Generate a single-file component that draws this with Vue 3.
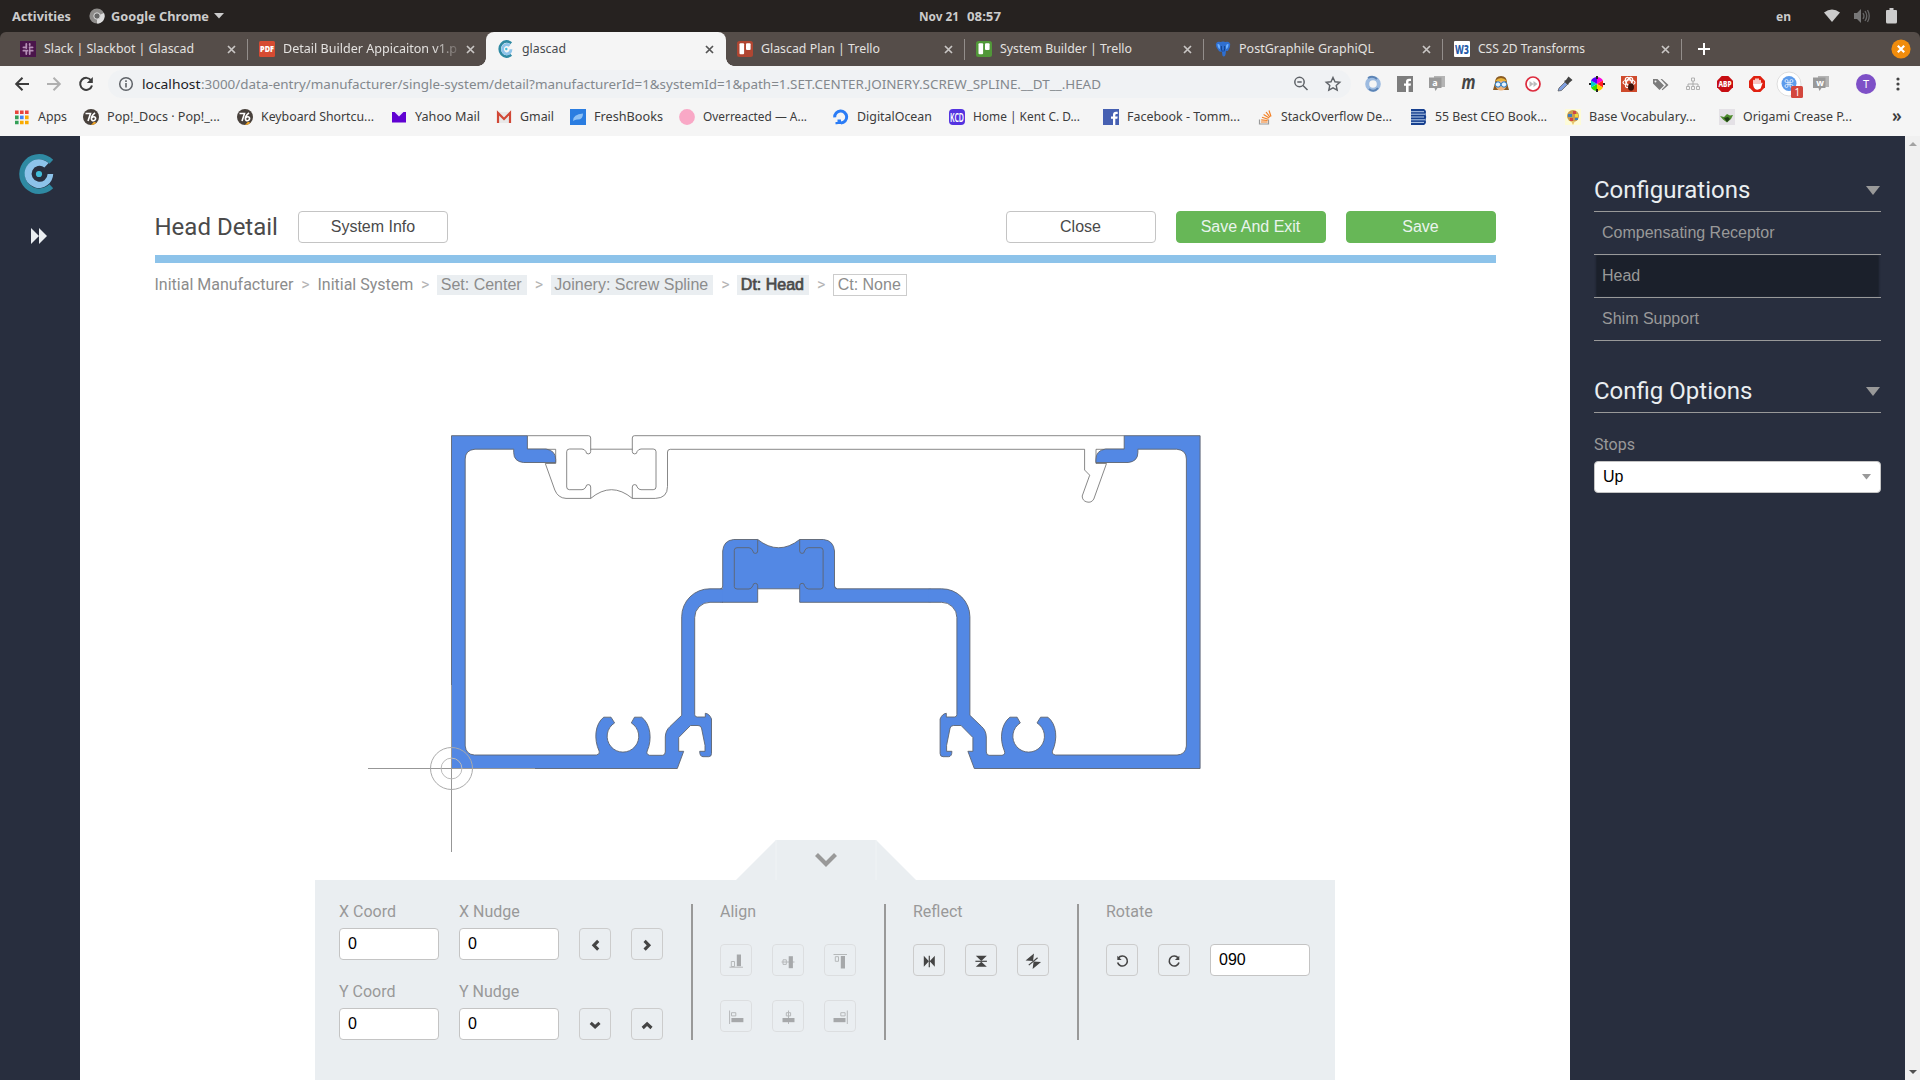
<script setup>
import { h } from 'vue'

// Text drawn to an exact advance width, used for the browser chrome labels
const FitText = (p) =>
  h('svg', { width: p.w, height: 18, style: 'display:block;overflow:visible;flex:none' }, [
    h('text', {
      x: 0, y: 14, textLength: p.w, lengthAdjust: 'spacingAndGlyphs', fill: 'currentColor'
    }, p.t)
  ])
FitText.props = ['t', 'w']

const logo = '<path d="M13.2 2.2A7 7.6 0 1 0 13.2 13.8" fill="none" stroke="#2f8aa3" stroke-width="2.6"/><path d="M11.6 4.7A4.2 4.7 0 1 0 13 8.2" fill="none" stroke="#8dc3ea" stroke-width="2.8"/><circle cx="8.3" cy="8" r="1.2" fill="#40bcd8"/>'
const trello = (c) => `<rect width="16" height="16" rx="2.5" fill="${c}"/><rect x="2.5" y="2.3" width="4.6" height="11" rx="1" fill="#fff"/><rect x="9" y="2.3" width="4.6" height="6.6" rx="1" fill="#fff"/>`
const pop = '<circle cx="8" cy="8" r="8" fill="#48413c"/><path d="M2.500 4.500h5L5 12M12 3.800Q8 7 8.400 10q.6 2.200 2.600 1.600 2.200-1 1.400-3-1.200-1.800-3.600.2" fill="none" stroke="#fff" stroke-width="1.600"/><path d="M8 16q3 0 5.500-2.200L11 12.800z" fill="#f5a623"/>'

const tabs = [
  { t: 'Slack | Slackbot | Glascad', w: 150, sep: true,
    i: '<rect width="16" height="16" fill="#4a154b"/><g stroke="#b58fb6" stroke-width="1.800" stroke-linecap="round"><path d="M6.300 3v4M9.700 3v1M9.700 6.200v.800M12.600 6.300h-3M3.400 6.300h3M3.400 9.700h4M9.700 9v4M9.700 9.700h3M6.300 9.700V13"/></g>' },
  { t: 'Detail Builder Appicaiton v1.p', w: 174, fade: true,
    i: '<rect width="16" height="16" rx="1.500" fill="#d64b32"/><text x="1" y="11" textLength="14" lengthAdjust="spacingAndGlyphs" font-family="Noto Sans" font-weight="900" font-size="8" fill="#fff">PDF</text>' },
  { t: 'glascad', w: 44, active: true, i: logo },
  { t: 'Glascad Plan | Trello', w: 119, sep: true, i: trello('#b04632') },
  { t: 'System Builder | Trello', w: 132, sep: true, i: trello('#519839') },
  { t: 'PostGraphile GraphiQL', w: 135, sep: true,
    i: '<path d="M.8 3Q2-.3 5.600 1 8 0 10.400 1 14-.3 15.200 3q.4 3.500-2 6.500-1.200 1-2.200.3-.2 4.200-1 5.200-1.500 1.200-2.600-.5L6.900 10.500Q5 11.500 3.500 9.500.5 6 .8 3z" fill="#2f6fd0"/><path d="M2.500 3q2.500-.5 2.500 3t-1.500 1Q2.300 5 2.500 3zM13.500 3q-2.500-.5-2.500 3t1.500 1q1.200-2 1-4z" fill="#6eb1ff"/><path d="M6.300 5q-.3 3.500 1 5.500M9.700 5q.3 3-.8 5.500" fill="none" stroke="#123f86"/>' },
  { t: 'CSS 2D Transforms', w: 107, sep: true,
    i: '<rect width="16" height="16" rx="1" fill="#fff"/><text x="1" y="12.500" textLength="14" lengthAdjust="spacingAndGlyphs" font-family="Noto Sans" font-weight="800" font-size="12.500" fill="#1f5aa8">W3</text>' }
]

const bookmarks = [
  { t: 'Apps', w: 29, x: 14, end: 83, i: '<path fill="#e8453c" d="M1 1.500h3.600v3.600H1zM6 1.500h3.600v3.600H6zM11 1.500h3.600v3.600H11z"/><path fill="#34a058" d="M1 6.600h3.600v3.600H1zM1 11.700h3.600v3.600H1z"/><path fill="#4285f4" d="M6 6.600h3.600v3.600H6z"/><path fill="#f9ab00" d="M11 6.600h3.600v3.600H11zM6 11.700h3.600v3.600H6zM11 11.700h3.600v3.600H11z"/>' },
  { t: 'Pop!_Docs · Pop!_...', w: 113, x: 83, end: 237, i: pop },
  { t: 'Keyboard Shortcu...', w: 113, x: 237, end: 391, i: pop },
  { t: 'Yahoo Mail', w: 65, x: 391, end: 496, i: '<rect x="1" y="3" width="14" height="10.500" fill="#6001d2"/><path d="M3.500 3h9L8 7.500z" fill="#fff" opacity=".9"/>' },
  { t: 'Gmail', w: 34, x: 496, end: 570, i: '<rect x="1" y="3" width="14" height="11" fill="#e8e8e8"/><path d="M2 14V4l6 6 6-6v10" fill="none" stroke="#d14836" stroke-width="2.200"/>' },
  { t: 'FreshBooks', w: 69, x: 570, end: 679, i: '<rect width="16" height="16" fill="#2a7de1"/><path d="M3 12Q3 5 13 4.500 13 11 7 10.500 5 10.500 3 12z" fill="#8cc0f5"/>' },
  { t: 'Overreacted — A...', w: 104, x: 679, end: 833, i: '<circle cx="8" cy="8" r="7.900" fill="#f9a8c6"/>' },
  { t: 'DigitalOcean', w: 75, x: 833, end: 949, i: '<path d="M8 14a6 6 0 1 0-6.300-5.600" fill="none" stroke="#2b7cf6" stroke-width="3"/><path d="M4.500 10.500H8V15H4.500zM2.500 13h2v2.300h-2z" fill="#2b7cf6"/>' },
  { t: 'Home | Kent C. D...', w: 107, x: 949, end: 1103, i: '<rect width="16" height="16" rx="4" fill="#5433e0"/><text x="1" y="12.500" textLength="14" lengthAdjust="spacingAndGlyphs" font-family="Noto Sans" font-weight="600" font-size="12.500" fill="#fff">KCD</text>' },
  { t: 'Facebook - Tomm...', w: 113, x: 1103, end: 1257, i: '<rect width="16" height="16" fill="#4660b2"/><path d="M10 16V9.800h-2V7.500h2V5.700q0-2.900 3-2.900h1.700v2.300h-1.200q-1.200 0-1.200 1v1.400h2.400l-.4 2.300h-2V16z" fill="#fff"/>' },
  { t: 'StackOverflow De...', w: 111, x: 1257, end: 1411, i: '<path d="M2.500 10.500v4.500h9v-4.500" fill="none" stroke="#999" stroke-width="1.200"/><path d="M4 13h6.500M4.200 10.800l6.400.7M5 8.200l6.200 2M6.600 5.600l5.600 3.500M9 3l4 5.200M12 1.500l2 6" stroke="#f48024" stroke-width="1.200"/>' },
  { t: '55 Best CEO Book...', w: 112, x: 1411, end: 1565, i: '<path d="M0 0h13q3 2 1.500 5Q16 8 14.500 11q1.500 3-1.500 5H0z" fill="#17408f"/><path d="M0 2.700h13M0 5.200h14M0 8h13M0 10.800h14M0 13.400h13" stroke="#c8dcf5" stroke-width=".9"/>' },
  { t: 'Base Vocabulary...', w: 107, x: 1565, end: 1719, i: '<rect width="16" height="16" fill="#fdfbd8"/><circle cx="8" cy="7" r="6" fill="#c99c4e"/><path d="M3 5h4v3H3zM10 9h3v2h-3z" fill="#3e7cc0"/><path d="M8 2h3v3H8zM5 9h3v3H5z" fill="#cf4747"/><path d="M10 5h3v3h-3z" fill="#f3d83b"/><path d="M6 12l2 4 2-4" fill="#e9c46a"/>' },
  { t: 'Origami Crease P...', w: 109, x: 1719, end: 1880, i: '<rect width="16" height="16" fill="#e4e1e6"/><path d="M1 7l4 1 3-3 3 1.500 3-.5-2 4-4 3.500-4-3z" fill="#4c8a2c"/><path d="M5 9l4-1 2 2-3 3z" fill="#1f3c16"/>' }
]

const bubble = (c) => `<rect x="5" y="0" width="11" height="11" fill="#b4b4b4"/><path d="M0 1.500h12.500v10.500H8.500L6.500 15l-1-3H0z" fill="#999"/><text x="3.200" y="10" font-family="Noto Sans" font-weight="700" font-size="9" fill="#fff">${c}</text>`
const extensions = [
  '<circle cx="8" cy="8" r="5.800" fill="none" stroke="#9dbbe0" stroke-width="4"/><path d="M3 2Q8-1 12 3M13 12Q9 17 4 13" fill="none" stroke="#5c84b5" stroke-width="2"/>',
  '<rect width="16" height="16" fill="#7d7d7d"/><path d="M9 16V9.800H7V7.500h2V5.700q0-2.900 3-2.900h2v2.300h-1.400q-1.200 0-1.200 1v1.400H14l-.4 2.300h-2V16z" fill="#fff"/>',
  bubble('a'),
  '<text x=".5" y="12.500" textLength="14" lengthAdjust="spacingAndGlyphs" font-family="Noto Sans" font-style="italic" font-weight="700" font-size="19" fill="#444">m</text>',
  '<path d="M2 7q0-7 6-7t6 7l2 7H0z" fill="#8a5a21"/><circle cx="8" cy="9" r="5.500" fill="#f0b47c"/><path d="M2 5q6-6 12 0z" fill="#e9b43b"/><circle cx="5" cy="8.500" r="2.700" fill="#e6f4ff" stroke="#1e78c8"/><circle cx="11" cy="8.500" r="2.700" fill="#e6f4ff" stroke="#1e78c8"/>',
  '<circle cx="8" cy="8" r="7" fill="#fff" stroke="#dd2c3e" stroke-width="1.700"/><path d="M4.500 5l4 3-4 3zM8.500 5l4 3-4 3z" fill="#bbb"/>',
  '<path d="M1 15l1-3 6-6 2.500 2.500-6 6z" fill="#7f9fe0" stroke="#555" stroke-width=".7"/><path d="M7 5l2-1 2.500-3.500 4 3.500-3.500 3-1 2z" fill="#444"/>',
  '<path d="M8 8V1a7 7 0 0 1 6 3.500z" fill="#f0d"/><path d="M8 8l6-3.500v7z" fill="#f22"/><path d="M8 8l6 3.500A7 7 0 0 1 8 15z" fill="#fc0"/><path d="M8 8v7a7 7 0 0 1-6-3.500z" fill="#3d0"/><path d="M8 8l-6 3.500v-7z" fill="#0cc"/><path d="M8 8L2 4.500A7 7 0 0 1 8 1z" fill="#50f"/><path d="M7 0h2v3H7zM7 13h2v3H7zM0 7h2v2H0zM14 7h2v2h-2z" fill="#222"/>',
  '<rect width="16" height="16" fill="#cf4a2c"/><g fill="none" stroke="#fff" stroke-width="1.200"><ellipse cx="8" cy="6.500" rx="6" ry="2.500"/><ellipse cx="8" cy="6.500" rx="2.500" ry="5.500" transform="rotate(30 8 6.500)"/><ellipse cx="8" cy="6.500" rx="2.500" ry="5.500" transform="rotate(-30 8 6.500)"/></g><ellipse cx="10" cy="11" rx="3" ry="3.800" fill="#3a120b"/>',
  '<path d="M0 3v4.500l6.500 6.500L11 9.500 4.500 3zM6 3h1.500L13 9l-4.300 4.500.8.700L15.500 9 9 3z" fill="#7c7c7c"/><circle cx="2.500" cy="5.500" r="1" fill="#f5f5f5"/>',
  '<path d="M8 4v8M3 11V8h10v3" fill="none" stroke="#aaa"/><path d="M6.500 2h3v3h-3zM1.500 10.500h3v3h-3zM6.500 10.500h3v3h-3zM11.500 10.500h3v3h-3z" fill="#f5f5f5" stroke="#aaa" stroke-width=".9"/>',
  '<path d="M4.700 0h6.600L16 4.700v6.600L11.300 16H4.700L0 11.300V4.700z" fill="#c70d12"/><text x="1.500" y="11" textLength="13" lengthAdjust="spacingAndGlyphs" font-family="Noto Sans" font-weight="800" font-size="8" fill="#fff">ABP</text>',
  '<path d="M4.700 0h6.600L16 4.700v6.600L11.300 16H4.700L0 11.300V4.700z" fill="#e02010"/><path d="M5 9V4.500M7 8V3M9 8V3M11 9V4.500" stroke="#fff" stroke-width="1.500" stroke-linecap="round"/><path d="M4.300 8h7.500l1-1.500.800.500-2 5.500q-3 2-5.500.5Q4 11 4.300 8z" fill="#fff"/>',
  '<circle cx="8" cy="8" r="12" fill="#fff" stroke="#dedede"/><circle cx="8" cy="7.500" r="7.500" fill="#5d9cec"/><path d="M5.500 3.500a1.500 1.500 0 1 0 0 3h5a1.500 1.500 0 1 0-1.500-1.500v5a1.500 1.500 0 1 0 1.500-1.500h-5A1.500 1.500 0 1 0 7 10V5a1.500 1.500 0 0 0-1.500-1.500z" fill="none" stroke="#d5e6fb"/><rect x="10" y="10" width="12" height="12" rx="1.500" fill="#d3473d"/><text x="13.500" y="20" font-family="Noto Sans" font-size="10" fill="#fff">1</text>',
  bubble('w')
]

const crumbs = [
  { t: 'Initial Manufacturer' },
  { t: 'Initial System' },
  { t: 'Set: Center', c: 'chip' },
  { t: 'Joinery: Screw Spline', c: 'chip' },
  { t: 'Dt: Head', c: 'chip current' },
  { t: 'Ct: None', c: 'outline' }
]

const chev = (d) => `<path d="${d}" fill="none" stroke="#444" stroke-width="3.100"/>`
const left = chev('M11.200 4.900L6.900 9.300l4.300 4.400')
const right = chev('M5.600 4.900l4.300 4.400-4.300 4.400')
const down = chev('M3.700 6.900L8.100 11l4.400-4.100')
const up = chev('M3.700 12L8.100 7.900l4.400 4.100')

// filled bar + outlined box + guide line
const alignIcons = [
  '<path d="M1.500 15.200H15" stroke="#777"/><path d="M3.300 9.500h3.200v5H3.300z" fill="none" stroke="#777"/><path d="M8.800 2.500H13v11.700H8.800z" fill="#555"/>',
  '<path d="M1.500 10h13" stroke="#777"/><path d="M3 7.800h3.300v4.600H3z" fill="none" stroke="#777"/><path d="M8.700 4.200h4.200v12H8.700z" fill="#555"/>',
  '<path d="M1.500 2.500H15" stroke="#777"/><path d="M3.300 4.700h3.200v4.600H3.300z" fill="none" stroke="#777"/><path d="M8.800 4H13v12.500H8.800z" fill="#555"/>',
  '<path d="M1.600 2.500v13.500" stroke="#777"/><path d="M3.500 4.700h4.300v3.200H3.500z" fill="none" stroke="#777"/><path d="M3.400 10h12v4.200h-12z" fill="#555"/>',
  '<path d="M8.500 2.500v13.500" stroke="#777"/><path d="M6.300 4.700h4.300v3.200H6.300z" fill="none" stroke="#777"/><path d="M2.500 10h12v4.200h-12z" fill="#555"/>',
  '<path d="M15.300 2.500v13.500" stroke="#777"/><path d="M8.800 4.700h4.300v3.200H8.800z" fill="none" stroke="#777"/><path d="M1.500 10h12v4.200h-12z" fill="#555"/>'
]
const mirror = '<path d="M2.800 3.800L7.900 9.300l-5.100 5.500zM13.800 3.800L8.700 9.300l5.100 5.500z"/><path d="M8.300 3.700v11.500" stroke="#444" stroke-width="1.200"/>'
const reflectIcons = [
  mirror,
  `<g transform="rotate(90 8.300 9.300)">${mirror}</g>`,
  `<g transform="rotate(50 8.300 9.300)">${mirror}</g>`
]
const ccw = '<path d="M4.400 6A5 5 0 1 1 3.600 10.500" fill="none" stroke="#444" stroke-width="1.600"/><path d="M3.300 3.700v4.400h4.400z"/>'
const cw = `<g transform="translate(16.600) scale(-1 1)">${ccw}</g>`

const configs = ['Compensating Receptor', 'Head', 'Shim Support']

const half = 'M722.700 602.300H710A15.200 15.200 0 0 0 694.700 617.500V714.500Q694.700 717 697.200 717H705.300V713.300Q709.500 713.800 711.500 719V753.500Q711.500 756.700 708.500 756.700H703Q699.700 756.500 699.700 751.300H705V745.300L701.500 728Q700.800 725.500 698 725.500H690.500L678.700 737.500V751.300H683.700L677.300 768.500H451.500V435.700H527.400V449H546Q555.700 450.500 555.700 459.500V462.500H523.500Q513.700 461.500 513.700 452.500V449.200H475Q465.200 450 465.200 459V746Q466 754.500 474.500 755H596.500Q600.500 754 599.200 751.200C593.500 739 595 724 603.700 717.200H611L614.600 722.900A15.800 15.800 0 1 0 631.300 722.900L634.500 717.200H641.700C650.500 724 652.500 739 647.200 751Q646 754.500 649.500 755.300H662.500Q665 755.300 665.300 752V737Q665.500 730.500 670 726.500L681.700 715.300V616.700A28 28 0 0 1 710 588.800H722.700'
const hook = 'M757.700 539.500V551a2.400 2.400 0 0 1-4.800 0q-1.500-3.300-3.900-3.300H737q-2.700 0-2.700 2.700V586.500q0 2.500 2.700 2.500H749q2.400 0 3.900-3.300a2.400 2.400 0 0 1 4.800 0V602.300'
</script>

<template>
  <div class="screen">
    <header class="topbar">
      <div class="top-left">
        <FitText t="Activities" :w="59" />
        <svg class="chrome" width="16" height="16" viewBox="0 0 16 16"><circle cx="8" cy="8" r="7.600" fill="#8e8c8a" /><path d="M8 8l7-3a7.600 7.600 0 0 1-7 10.600z" fill="#ddd" /><circle cx="8" cy="8" r="3.200" fill="#666" stroke="#ddd" /></svg>
        <FitText t="Google Chrome" :w="98" />
        <svg class="caret" width="10" height="6"><path d="M0 0h10L5 5.500z" fill="#ccc" /></svg>
      </div>
      <div class="clock"><FitText t="Nov 21" :w="40" /><FitText t="08:57" :w="34" /></div>
      <div class="top-right">
        <FitText t="en" :w="15" />
        <svg class="wifi" width="16" height="14"><path d="M0 3.500Q8-2.500 16 3.500L8 13z" fill="#ccc" /></svg>
        <svg class="sound" width="17" height="16"><path d="M1 5h3l4-4v14l-4-4H1z" fill="#777" /><path d="M10 5q2 3 0 6M12 3q3.500 5 0 10M14.500 2q3.500 6 0 12" fill="none" stroke="#666" stroke-width="1.300" /></svg>
        <svg class="battery" width="11" height="16"><path d="M3.500 0h4v2H10q1 0 1 1v11q0 1.500-1.500 1.500h-8Q0 15.500 0 14V3q0-1 1-1h2.500z" fill="#ccc" /></svg>
      </div>
    </header>

    <nav class="tabs">
      <div v-for="tab in tabs" :key="tab.t" class="tab" :class="{ active: tab.active, sep: tab.sep, fade: tab.fade }">
        <svg class="fav" width="16" height="16" viewBox="0 0 16 16" v-html="tab.i" />
        <FitText class="tab-text" :t="tab.t" :w="tab.w" />
        <svg class="x" width="9" height="9" viewBox="0 0 9 9"><path d="M1 1l7 7M8 1L1 8" stroke="currentColor" stroke-width="1.700" /></svg>
      </div>
      <svg class="plus" width="12" height="12"><path d="M6 0v12M0 6h12" stroke="#fff" stroke-width="2" /></svg>
      <svg class="close" width="20" height="20"><circle cx="10" cy="10" r="9.600" fill="#f08c0c" /><path d="M6.800 6.800l6.400 6.400M13.200 6.800l-6.400 6.400" stroke="#fff" stroke-width="2.200" /></svg>
    </nav>

    <div class="toolbar">
      <svg class="nav-ico" width="16" height="16"><path d="M15 8H2.500M8.500 1.700L2.200 8l6.300 6.300" fill="none" stroke="#3c3c3c" stroke-width="2" /></svg>
      <svg class="nav-ico" width="16" height="16"><path d="M1 8h12.500M7.500 1.700L13.800 8l-6.300 6.300" fill="none" stroke="#b0b0b0" stroke-width="2" /></svg>
      <svg class="nav-ico" width="16" height="16"><path d="M13.200 4.500A6 6 0 1 0 14 9.500" fill="none" stroke="#3c3c3c" stroke-width="2" /><path d="M14.800 1v6h-6z" fill="#3c3c3c" /></svg>
      <div class="url">
        <svg class="info" width="16" height="16"><circle cx="8" cy="8" r="6.300" fill="none" stroke="#5f6368" stroke-width="1.500" /><path d="M8 7v4.500M8 4.300V6" stroke="#5f6368" stroke-width="1.600" /></svg>
        <FitText class="host" t="localhost" :w="58.500" />
        <FitText class="path" t=":3000/data-entry/manufacturer/single-system/detail?manufacturerId=1&systemId=1&path=1.SET.CENTER.JOINERY.SCREW_SPLINE.__DT__.HEAD" :w="900" />
        <svg class="lens" width="16" height="16"><circle cx="6.500" cy="6" r="4.700" fill="none" stroke="#5f6368" stroke-width="1.500" /><path d="M10 9.500l4.500 4.500M4.300 6h4.400" stroke="#5f6368" stroke-width="1.500" /></svg>
        <svg class="star" width="16" height="16"><path d="M8 1.500l2 4.300 4.800.500-3.600 3.200 1 4.700L8 11.800l-4.200 2.400 1-4.700L1.200 6.300 6 5.800z" fill="none" stroke="#5f6368" stroke-width="1.400" /></svg>
      </div>
      <div class="exts">
        <svg v-for="(e, n) in extensions" :key="n" width="16" height="16" viewBox="0 0 16 16" v-html="e" />
      </div>
      <div class="avatar">T</div>
      <svg class="dots" width="4" height="14"><circle cx="2" cy="2" r="1.600" /><circle cx="2" cy="7" r="1.600" /><circle cx="2" cy="12" r="1.600" /></svg>
    </div>

    <div class="bookmarks">
      <div v-for="b in bookmarks" :key="b.t" class="bm" :style="{ width: b.end - b.x + 'px' }">
        <svg width="16" height="16" viewBox="0 0 16 16" v-html="b.i" />
        <FitText class="bm-text" :t="b.t" :w="b.w" />
      </div>
      <span class="more">»</span>
    </div>

    <div class="app">
      <aside class="rail">
        <svg width="40" height="42" viewBox="0 0 40 42">
          <path d="M34.200 6.700A20 20 0 1 0 34.200 35.300L30.400 31.300A14.400 14.400 0 1 1 30.400 10.700z" fill="#2f8aa3" />
          <path d="M29.600 10.100A14.300 14.300 0 1 0 34.200 21H28.600A8 8 0 1 1 25.400 14.400z" fill="#8dc3ea" />
          <circle cx="20" cy="21" r="3.100" fill="#40bcd8" />
        </svg>
        <svg class="ff" width="16" height="16"><path d="M0 0l8 8-8 8zM8 0l8 8-8 8z" fill="#eaeef1" /></svg>
      </aside>

      <main class="main">
        <div class="head">
          <h1>Head Detail</h1>
          <button class="btn">System Info</button>
          <div class="actions">
            <button class="btn">Close</button>
            <button class="btn green">Save And Exit</button>
            <button class="btn green">Save</button>
          </div>
        </div>
        <div class="crumbs">
          <template v-for="(c, n) in crumbs" :key="c.t">
            <span v-if="n" class="gt">&gt;</span>
            <span :class="c.c">{{ c.t }}</span>
          </template>
        </div>

        <svg class="canvas" width="1341" height="544" viewBox="155 310 1341 544">
          <g fill="none" stroke="#6a6a6a" stroke-width=".8">
            <path d="M527.400 435.700H588.500Q590.700 435.700 590.700 438V451.500a2.400 2.400 0 0 1-4.800 0q-1.500-2.500-3.900-2.500H569.500q-2.800 0-2.800 2.700V487q0 2.700 2.800 2.700H582q2.400 0 3.900-2.700a2.400 2.400 0 0 1 4.800 0V498.400H566Q558 498 554.800 490L545.300 463.500H555.700V449.300H527.400" />
            <path d="M590.700 449.200H632.300M590.700 498.400Q611.500 481 632.300 498.400" />
            <path d="M1124.300 435.700H634.500Q632.300 435.700 632.300 438V451.500a2.400 2.400 0 0 0 4.800 0q1.500-2.500 3.900-2.500H653.200q2.800 0 2.800 2.700V487q0 2.700-2.800 2.700H641q-2.400 0-3.900-2.700a2.400 2.400 0 0 0-4.800 0V498.400H655.500Q667.500 498 667.500 486.500V452Q667.500 449.300 670.300 449.300H1084.600V470L1089.700 475.200 1082.200 496A6.200 6.200 0 0 0 1093.800 499L1106.500 463.500H1096V449.300H1124.300" />
          </g>
          <g fill="#5388e4" stroke="#5d6470" stroke-width=".9">
            <path stroke="none" d="M720 588.800H722.700V551Q723.500 540.500 733.700 539.500H757.700Q778.700 556 799.700 539.500H823.500Q833.500 540.500 834.500 551V586L837.500 588.800H931V602.300H799.700V588.800H757.700V602.300H720z" />
            <path :d="half" />
            <path :d="half" transform="translate(1651.600) scale(-1 1)" />
            <g fill="none">
              <path d="M720.500 588.800Q722.700 588.800 722.700 586V551Q723.500 540.500 733.700 539.500H757.700Q778.700 556 799.700 539.500H823.500Q833.500 540.500 834.500 551V586Q834.500 588.800 837.500 588.800H929M757.700 588.800H799.700M757.700 602.300H722M799.700 602.300H929" />
              <path :d="hook" /><path :d="hook" transform="translate(1557.400) scale(-1 1)" />
            </g>
          </g>
          <g fill="none" stroke="#979797"><path d="M368 768.500H535M451.500 685V852" /><circle cx="451.500" cy="768.500" r="21" stroke="#aaa" /><circle cx="451.500" cy="768.500" r="10.400" stroke="#bbb" /></g>
        </svg>

        <section class="dock">
          <svg class="handle" width="180" height="40"><path d="M0 40L40 0H140L180 40z" fill="#eaeef1" /><path d="M40 0V40M140 0V40" stroke="#f0f3f5" /><path d="M80.500 14.500L90 24l9.500-9.500" fill="none" stroke="#999" stroke-width="4.200" /></svg>
          <div class="panel">
            <div class="coords">
              <div class="row">
                <label>X Coord<span class="input">0</span></label>
                <label>X Nudge<span class="input">0</span></label>
                <span class="sq"><svg width="16" height="16" v-html="left" /></span>
                <span class="sq"><svg width="16" height="16" v-html="right" /></span>
              </div>
              <div class="row">
                <label>Y Coord<span class="input">0</span></label>
                <label>Y Nudge<span class="input">0</span></label>
                <span class="sq"><svg width="16" height="16" v-html="down" /></span>
                <span class="sq"><svg width="16" height="16" v-html="up" /></span>
              </div>
            </div>
            <i class="divider" />
            <div class="group">
              <span class="title">Align</span>
              <div class="grid disabled"><span v-for="(a, n) in alignIcons" :key="n" class="sq"><svg width="16" height="17" v-html="a" /></span></div>
            </div>
            <i class="divider" />
            <div class="group">
              <span class="title">Reflect</span>
              <div class="grid"><span v-for="(a, n) in reflectIcons" :key="n" class="sq"><svg width="16" height="16" fill="#444" v-html="a" /></span></div>
            </div>
            <i class="divider" />
            <div class="group">
              <span class="title">Rotate</span>
              <div class="row rot">
                <span class="sq"><svg width="16" height="16" fill="#444" v-html="ccw" /></span>
                <span class="sq"><svg width="16" height="16" fill="#444" v-html="cw" /></span>
                <span class="input">090</span>
              </div>
            </div>
          </div>
        </section>
      </main>

      <aside class="side">
        <div class="side-title"><h2>Configurations</h2><svg width="14" height="9"><path d="M0 0h14L7 9z" fill="#999" /></svg></div>
        <div v-for="c in configs" :key="c" class="config" :class="{ on: c === 'Head' }">{{ c }}</div>
        <div class="side-title second"><h2>Config Options</h2><svg width="14" height="9"><path d="M0 0h14L7 9z" fill="#999" /></svg></div>
        <div class="stops">Stops</div>
        <div class="select">Up<svg width="9" height="6"><path d="M0 0h9L4.500 5.500z" fill="#999" /></svg></div>
      </aside>
      <div class="scroll">
        <svg width="8" height="4"><path d="M0 4h8L4 0z" fill="#a3a3a3" /></svg>
        <svg width="8" height="4"><path d="M0 0h8L4 4z" fill="#505050" /></svg>
      </div>
    </div>
  </div>
</template>

<style>
html, body { margin: 0; overflow: hidden; }
</style>
<style scoped>
* { box-sizing: border-box; }
svg { display: block; flex: none; overflow: visible; }
.screen { width: 1920px; height: 1080px; display: flex; flex-direction: column; font: 13.2px "Noto Sans", sans-serif; background: #fff linear-gradient(#262220, #262220) no-repeat 0 0 / 100% 60px; overflow: hidden; }
.topbar { height: 32px; flex: none; background: #262220; color: #ccc; font-weight: 700; display: grid; grid-template-columns: 1fr 82px 1fr; align-items: center; }
.top-left { display: flex; align-items: center; padding-left: 12px; }
.chrome { margin: 0 6px 0 18px; }
.caret { margin-left: 5px; }
.clock { display: flex; justify-content: space-between; }
.top-right { display: flex; align-items: center; justify-content: flex-end; padding-right: 23px; }
.wifi { margin-left: 33px; }
.sound { margin-left: 13px; }
.battery { margin-left: 16px; }
.tabs { height: 34px; flex: none; background: #554d49; border-radius: 6px 6px 0 0; display: flex; align-items: center; padding-left: 8px; color: #e4e2e0; }
.tab { width: 239px; height: 34px; display: flex; align-items: center; padding-left: 12px; position: relative; flex: none; }
.tab-text { margin: -2px 0 0 8px; }
.x { position: absolute; right: 11px; top: 12.500px; color: #c9c6c4; }
.tab.sep::after { content: ""; position: absolute; right: -1px; top: 7px; width: 1px; height: 21px; background: #938e8b; }
.tab.fade .tab-text { -webkit-mask: linear-gradient(90deg, #000 150px, transparent 180px); mask: linear-gradient(90deg, #000 150px, transparent 180px); }
.tab.active { width: 240px; margin-right: -1px; background: #f5f5f5; color: #45494d; border-radius: 8px 8px 0 0; }
.tab.active .x { color: #555; right: 12px; }
.tab.active::before, .tab.active::after { content: ""; position: absolute; bottom: 0; width: 8px; height: 8px; }
.tab.active::before { left: -8px; background: radial-gradient(circle at 0 0, transparent 7.500px, #f5f5f5 8px); }
.tab.active::after { right: -8px; background: radial-gradient(circle at 100% 0, transparent 7.500px, #f5f5f5 8px); }
.plus { margin-left: 17px; }
.close { margin-left: auto; margin-right: 9px; }
.toolbar { height: 36px; flex: none; background: #f5f5f5; display: flex; align-items: center; padding-left: 14px; }
.nav-ico { margin-right: 16px; }
.url { width: 1243px; height: 28px; margin-left: -2px; border-radius: 14px; background: #f0f2f4; display: flex; align-items: center; padding-left: 10px; }
.info { margin-right: 8px; }
.host { color: #202124; }
.path { color: #83888d; }
.lens { margin-left: 192px; }
.star { margin-left: 16px; }
.exts { display: flex; gap: 16px; margin-left: 14px; }
.avatar { width: 20px; height: 20px; border-radius: 50%; margin-left: 27px; background: #7e50c7; color: #fff; font-size: 11px; line-height: 20px; text-align: center; }
.dots { margin-left: 20px; fill: #444; }
.bookmarks { height: 34px; flex: none; background: #f5f5f5; color: #3c3c3c; display: flex; align-items: center; padding: 0 0 4px 14px; }
.bm { display: flex; align-items: center; gap: 8px; flex: none; }
.bm-text { margin-top: -2px; }
.more { margin: -2px 0 0 12px; font-size: 17px; font-weight: 600; line-height: 18px; }
.app { flex: 1; display: flex; min-height: 0; background: #fff; }
.rail { width: 80px; background: #282e3e; display: flex; flex-direction: column; align-items: center; padding: 17px 2px 0 0; }
.ff { margin-top: 33px; }
.main { width: 1490px; padding: 75px 74px 0 75px; font: 16px Roboto, sans-serif; color: #4a4a4a; display: flex; flex-direction: column; }
.head { display: flex; height: 52px; border-bottom: 8px solid #8dc3ea; align-items: flex-start; flex: none; }
h1, h2 { margin: 0; font: 24px/32px Roboto, sans-serif; }
h1 { margin: 0 20.500px 0 -0.500px; color: #4a4a4a; }
.btn { width: 150px; height: 32px; border: 1px solid #c4c4c4; border-radius: 4px; background: #fff; font: 16px/18px "Liberation Sans", sans-serif; color: #4a4a4a; padding: 0 1px 1px 0; }
.actions { margin-left: auto; display: flex; gap: 20px; }
.green { background: #67b757; border-color: #67b757; color: #eaf4ee; }
.crumbs { display: flex; align-items: center; height: 22px; margin: 11px 0 0 -0.500px; color: #8c8c8c; font: 16px/20px Roboto, sans-serif; flex: none; white-space: nowrap; }
.gt { color: #b5b5b5; margin: 0 7.800px; }
.chip, .outline { font-family: "Liberation Sans", sans-serif; padding: 0 5.200px 0 3.500px; }
.chip { background: #eaeef1; }
.current { color: #4a4a4a; -webkit-text-stroke: .7px #4a4a4a; }
.outline { border: 1px solid #ccc; }
.canvas { margin-top: 14px; }
.dock { margin: -14px 0 0 160px; width: 1019.500px; position: relative; flex: none; }
.handle { margin-left: 420.500px; }
.panel { height: 200px; background: #eaeef1; padding: 24px; display: flex; color: #999; }
.row { display: flex; gap: 20px; align-items: flex-end; }
.coords .row { height: 56px; margin-bottom: 24px; }
label { display: flex; flex-direction: column; height: 56px; width: 100px; line-height: 16px; justify-content: space-between; }
.input { width: 100px; height: 32px; background: #fff; border: 1px solid #c4c4c4; border-radius: 4px; padding-left: 8px; color: #000; font: 16px/29px "Liberation Sans", sans-serif; }
.sq { width: 32px; height: 32px; border: 1px solid #ccc; border-radius: 4px; display: flex; align-items: center; justify-content: center; flex: none; }
.divider { width: 2px; height: 136px; background: #999; margin: 0 27px 0 28px; flex: none; }
.group { display: flex; flex-direction: column; }
.title { line-height: 16px; margin-bottom: 24px; }
.grid { display: grid; grid-template-columns: 32px 32px 32px; gap: 24px 20px; }
.disabled .sq { opacity: .45; }
.side { width: 335px; background: #282e3e; padding: 38px 24px 0; color: #999; font: 16px "Liberation Sans", sans-serif; }
.side-title { height: 38px; border-bottom: 1px solid #999; display: flex; justify-content: space-between; align-items: flex-start; color: #eaeef1; }
.side-title svg { margin: 11.500px 1.500px 0 0; }
.config { height: 43px; border-bottom: 1px solid #999; padding: 12px 8px 0; line-height: 18px; }
.on { background: #1b202b; box-shadow: inset 2px 0 2px #282e3e, inset -2px 0 2px #282e3e; }
.second { margin-top: 34px; }
.stops { font: 16px/18px Roboto, sans-serif; margin: 23px 0 7px; }
.select { height: 32px; background: #fff; border: 1px solid #c4c4c4; border-radius: 4px; color: #000; display: flex; justify-content: space-between; align-items: center; padding: 0 9.500px 0 8px; }
.scroll { width: 15px; background: #f0f0f0; display: flex; flex-direction: column; justify-content: space-between; align-items: center; padding: 6px 0; }
</style>
